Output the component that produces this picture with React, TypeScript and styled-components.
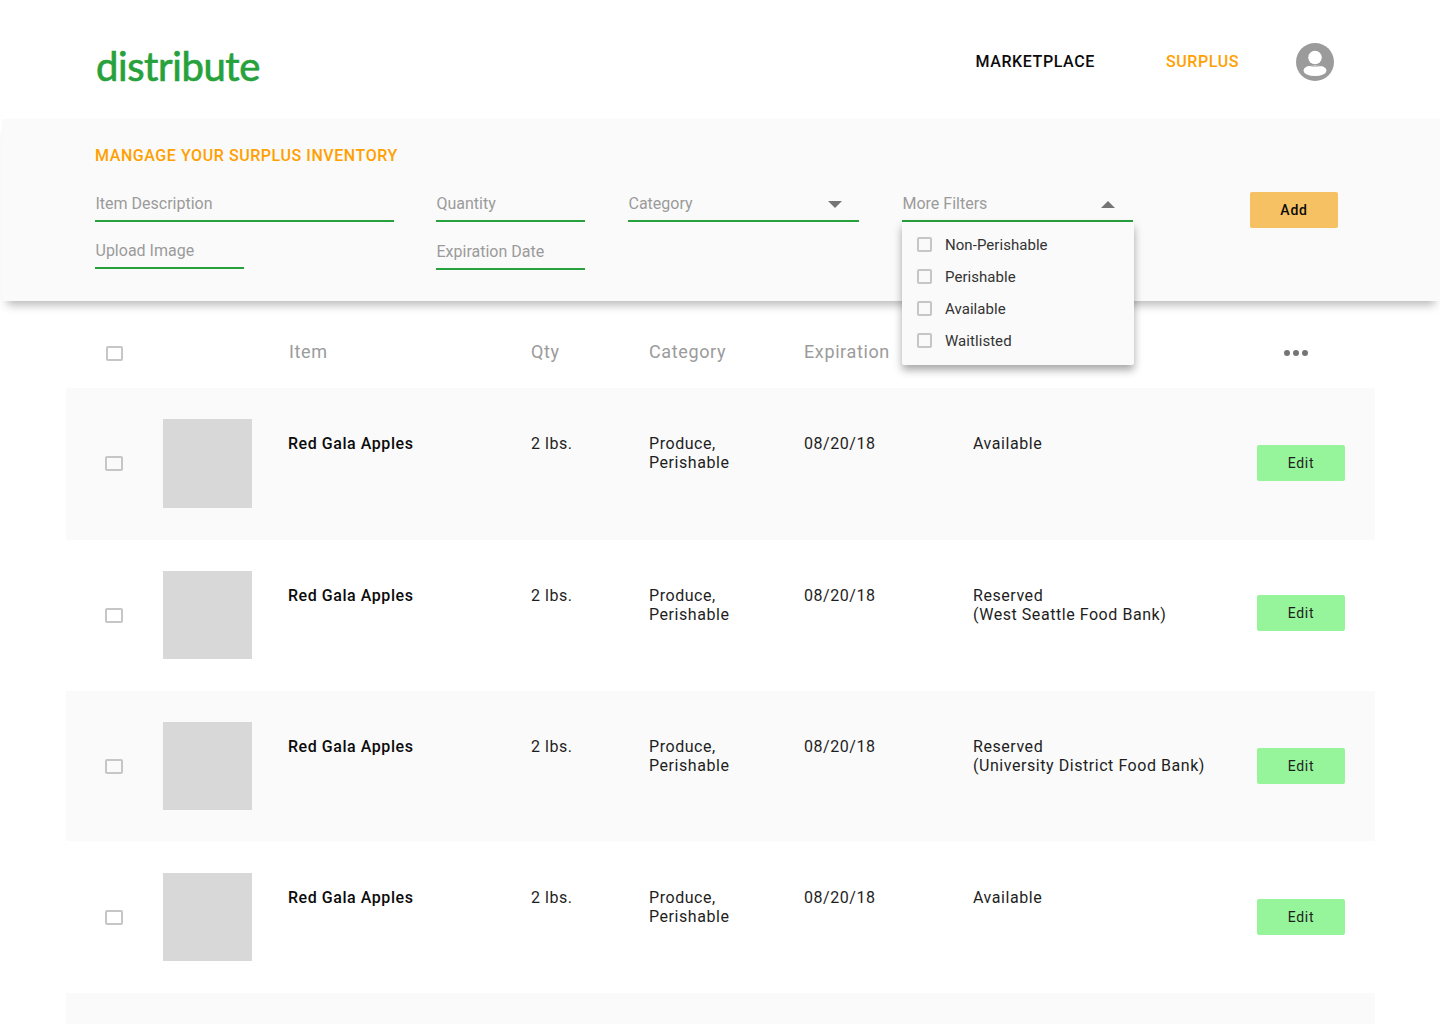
import React from "react";
import styled, { createGlobalStyle } from "styled-components";

const Global = createGlobalStyle`
  html, body { margin: 0; padding: 0; background: #fff; }
  body { font-family: Roboto, "Liberation Sans", sans-serif; width: 1440px; height: 1024px; overflow: hidden; }
  * { box-sizing: border-box; }
`;

const Page = styled.div`
  width: 1440px;
  height: 1024px;
  overflow: hidden;
  position: relative;
`;

const Header = styled.header`
  height: 119px;
  display: flex;
  align-items: flex-start;
  padding: 0 106px 0 96px;
`;

const Logo = styled.div`
  font-family: Lato, sans-serif;
  font-size: 40px;
  line-height: 48px;
  color: #27a13c;
  margin-top: 42px;
  font-weight: 400;
  letter-spacing: -0.4px;
  -webkit-text-stroke: 0.7px #27a13c;
`;

const Nav = styled.nav`
  margin-left: auto;
  display: flex;
  align-items: center;
  height: 38px;
  margin-top: 43px;
`;

const NavLink = styled.a<{ $active?: boolean }>`
  font-size: 16px;
  font-weight: 500;
  letter-spacing: 0.6px;
  color: ${(p) => (p.$active ? "#ffa000" : "#0b0b0b")};
  margin-right: ${(p) => (p.$active ? "57px" : "71px")};
  margin-top: -2px;
`;

const Panel = styled.section`
  margin-left: 2px;
  height: 182px;
  background: #fafafa;
  box-shadow: 0 9px 9px -5px rgba(0, 0, 0, 0.28);
  padding: 27px 0 0 93px;
  position: relative;
  z-index: 2;
`;

const PanelTitle = styled.h2`
  margin: 0;
  font-size: 16px;
  line-height: 19px;
  font-weight: 500;
  letter-spacing: 0.57px;
  color: #ffa000;
`;

const FormGrid = styled.div`
  margin-top: 21px;
  display: grid;
  grid-template-columns: 341px 192px 274px 348px 88px;
  grid-template-rows: 47px 47px;
  align-items: start;
`;

const Field = styled.div<{ $w: number; $tall?: boolean }>`
  width: ${(p) => p.$w}px;
  height: ${(p) => (p.$tall ? 37 : 36)}px;
  border-bottom: 2px solid #27a13c;
  font-size: 16px;
  line-height: 19px;
  letter-spacing: 0;
  color: #9b9b9b;
  padding: ${(p) => (p.$tall ? 9 : 8)}px 0 0 0.5px;
  display: flex;
  justify-content: space-between;
  position: relative;
`;

const Caret = styled.i<{ $up?: boolean }>`
  display: block;
  width: 0;
  height: 0;
  margin: 7px ${(p) => (p.$up ? 18 : 17)}px 0 0;
  border-left: 7px solid transparent;
  border-right: 7px solid transparent;
  ${(p) => (p.$up ? "border-bottom: 7px solid #757575;" : "border-top: 7px solid #757575;")}
`;

const AddButton = styled.button`
  width: 88px;
  height: 36px;
  margin-top: 6px;
  border: 0;
  border-radius: 2px;
  background: #f6c162;
  font-family: inherit;
  font-size: 14px;
  font-weight: 500;
  letter-spacing: 0.75px;
  color: #0b0b0b;
`;

const Menu = styled.div`
  position: absolute;
  left: 900px;
  top: 103px;
  width: 232px;
  height: 143px;
  padding-top: 7px;
  background: #fafafa;
  border-radius: 2px;
  box-shadow: 0 5px 8px rgba(0, 0, 0, 0.35);
  z-index: 3;
`;

const MenuItem = styled.div`
  height: 32px;
  display: flex;
  align-items: center;
  padding-left: 15px;
  gap: 13px;
  font-size: 15px;
  letter-spacing: 0.05px;
  color: #333;
`;

const Check = styled.span<{ $w?: number }>`
  display: block;
  flex: none;
  width: ${(p) => p.$w ?? 15}px;
  height: 15px;
  border: 2px solid #c6c6c6;
  border-radius: 2px;
  background: transparent;
`;

const MenuCheck = styled(Check)`
  margin-top: -2px;
`;

const Table = styled.div`
  margin: 0 65px 0 66px;
`;

const columns = "97px 125px 243px 118px 155px 169px 284px 88px";

const HeadRow = styled.div`
  height: 87px;
  display: grid;
  grid-template-columns: 97px 126px 242px 118px 155px 169px 284px 88px;
  align-items: center;
  font-size: 18px;
  line-height: 21px;
  letter-spacing: 0.62px;
  color: #9b9b9b;
  padding-top: 13px;
`;

const HeadCheck = styled.div`
  padding: 4px 0 0 40px;
`;

const More = styled.div`
  grid-column: 8;
  display: flex;
  gap: 3px;
  padding: 4px 0 0 27px;
`;

const Dot = styled.i`
  display: block;
  width: 6px;
  height: 6px;
  border-radius: 50%;
  background: #757575;
`;

const Row = styled.div<{ $shade: boolean; $h: number; $pad: number }>`
  height: ${(p) => p.$h}px;
  background: ${(p) => (p.$shade ? "#fafafa" : "#fff")};
  display: grid;
  grid-template-columns: ${columns};
  align-items: start;
  padding-top: ${(p) => p.$pad}px;
  font-size: 16px;
  line-height: 19px;
  letter-spacing: 0.55px;
  color: #1e1e1e;
`;

const RowCheck = styled.div`
  padding: 37px 0 0 39px;
`;

const Thumb = styled.div<{ $h: number }>`
  width: 89px;
  height: ${(p) => p.$h}px;
  background: #d8d8d8;
`;

const Cell = styled.div`
  padding-top: 15px;
  white-space: nowrap;
`;

const ItemName = styled(Cell)`
  font-weight: 500;
  color: #0b0b0b;
`;

const EditCell = styled.div<{ $top: number }>`
  grid-column: 8;
  padding-top: ${(p) => p.$top}px;
`;

const EditButton = styled.button`
  width: 88px;
  height: 36px;
  border: 0;
  border-radius: 2px;
  background: #96f59b;
  font-family: inherit;
  font-size: 14px;
  letter-spacing: 0.7px;
  color: #1e1e1e;
`;

const rows = [
  { h: 152, pad: 31, thumb: 89, edit: 26, status: ["Available"] },
  { h: 151, pad: 31, thumb: 88, edit: 24, status: ["Reserved", "(West Seattle Food Bank)"] },
  { h: 150, pad: 31, thumb: 88, edit: 26, status: ["Reserved", "(University District Food Bank)"] },
  { h: 152, pad: 32, thumb: 88, edit: 26, status: ["Available"] },
];

const lines = (l: string[]) =>
  l.map((t, i) => (
    <React.Fragment key={t}>
      {i > 0 && <br />}
      {t}
    </React.Fragment>
  ));

export default function App() {
  return (
    <Page>
      <Global />
      <Header>
        <Logo>distribute</Logo>
        <Nav>
          <NavLink>MARKETPLACE</NavLink>
          <NavLink $active>SURPLUS</NavLink>
          <svg width="38" height="38" viewBox="0 0 38 38">
            <circle cx="19" cy="19" r="19" fill="#9b9b9b" />
            <circle cx="19" cy="14.5" r="6.8" fill="#fff" />
            <ellipse cx="19" cy="27.5" rx="11.5" ry="5.6" fill="#fff" />
            <path d="M7 20.6 C 10 23 28 23 31 20.6 L 31 21.8 C 28 24 10 24 7 21.8 Z" fill="#9b9b9b" />
          </svg>
        </Nav>
      </Header>
      <Panel>
        <PanelTitle>MANGAGE YOUR SURPLUS INVENTORY</PanelTitle>
        <FormGrid>
          <Field $w={299}>Item Description</Field>
          <Field $w={149}>Quantity</Field>
          <Field $w={231}>
            Category
            <Caret />
          </Field>
          <Field $w={231}>
            More Filters
            <Caret $up />
          </Field>
          <AddButton>Add</AddButton>
          <Field $w={149}>Upload Image</Field>
          <Field $w={149} $tall>
            Expiration Date
          </Field>
        </FormGrid>
        <Menu>
          {["Non-Perishable", "Perishable", "Available", "Waitlisted"].map((t) => (
            <MenuItem key={t}>
              <MenuCheck />
              {t}
            </MenuItem>
          ))}
        </Menu>
      </Panel>
      <Table>
        <HeadRow>
          <HeadCheck>
            <Check $w={17} />
          </HeadCheck>
          <span />
          <span>Item</span>
          <span>Qty</span>
          <span>Category</span>
          <span>Expiration</span>
          <span />
          <More>
            <Dot />
            <Dot />
            <Dot />
          </More>
        </HeadRow>
        {rows.map((r, i) => (
          <Row key={i} $shade={i % 2 === 0} $h={r.h} $pad={r.pad}>
            <RowCheck>
              <Check $w={18} />
            </RowCheck>
            <Thumb $h={r.thumb} />
            <ItemName>Red Gala Apples</ItemName>
            <Cell>2 lbs.</Cell>
            <Cell>
              Produce,
              <br />
              Perishable
            </Cell>
            <Cell>08/20/18</Cell>
            <Cell>{lines(r.status)}</Cell>
            <EditCell $top={r.edit}>
              <EditButton>Edit</EditButton>
            </EditCell>
          </Row>
        ))}
        <Row $shade $h={60} $pad={0} />
      </Table>
    </Page>
  );
}
